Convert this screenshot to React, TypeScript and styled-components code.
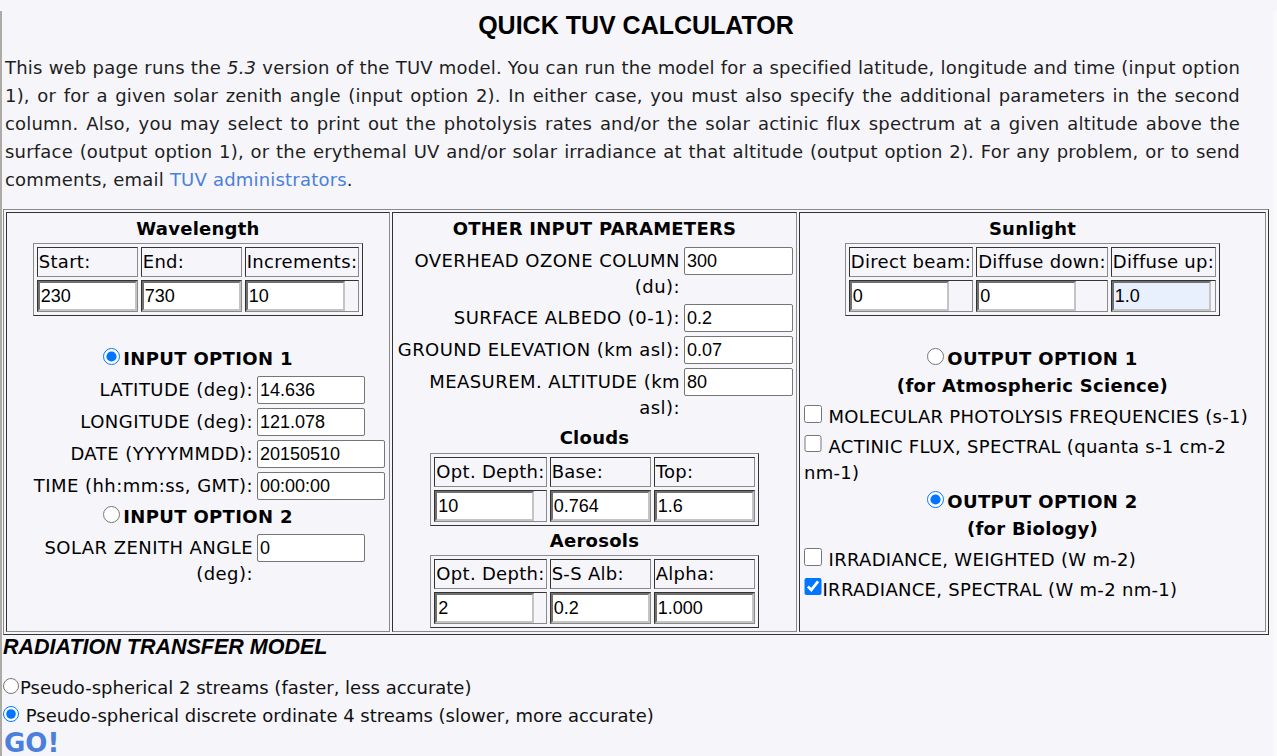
import React from "react";
import styled, { createGlobalStyle } from "styled-components";

const GlobalStyle = createGlobalStyle`
  html, body {
    margin: 0;
    padding: 0;
    background: #f5f5fa;
  }
  body {
    font-family: "DejaVu Sans", Verdana, sans-serif;
    font-size: 18px;
    color: #111;
  }
`;

const Page = styled.div`
  box-sizing: border-box;
  min-height: 756px;
  border-left: 2px solid #aeaaa5;
  border-right: 4px solid #f9f9fc;
  padding: 0 4px 0 1px;
`;

const Title = styled.h1`
  margin: 11px 0 0;
  font: bold 25px/29px "Liberation Sans", Arial, sans-serif;
  text-align: center;
  color: #000;
`;

const Intro = styled.p`
  margin: 14px 29px 0 2px;
  line-height: 28px;
  letter-spacing: 0.2px;
  text-align: justify;
  color: #1e1e1e;
`;

const Link = styled.a`
  color: #4a80dc;
  text-decoration: none;
`;

const Panel = styled.div`
  margin-top: 15px;
  display: grid;
  grid-template-columns: 384px 405px 467px;
  gap: 2px;
  padding: 2px;
  border: 1px solid;
  border-color: #8a8a8a #333 #333 #8a8a8a;
`;

const Column = styled.div<{ $px?: number }>`
  border: 1px solid;
  border-color: #333 #8a8a8a #8a8a8a #333;
  padding: 1px ${(p) => p.$px ?? 1}px 3px;
`;

const SectionTitle = styled.div<{ $mt?: number }>`
  margin-top: ${(p) => p.$mt ?? 0}px;
  font-weight: bold;
  text-align: center;
  line-height: 28px;
  letter-spacing: 0.25px;
  color: #000;
`;

const DataTable = styled.div<{ $mt?: number }>`
  display: grid;
  grid-template-columns: repeat(3, auto);
  gap: 3px;
  padding: 3px;
  width: max-content;
  margin: ${(p) => p.$mt ?? 0}px auto 0;
  border: 1px solid;
  border-color: #8a8a8a #333 #333 #8a8a8a;
`;

const HeadCell = styled.div`
  border: 1px solid;
  border-color: #333 #8a8a8a #8a8a8a #333;
  padding: 0 1px;
  line-height: 28px;
  letter-spacing: 0.3px;
  white-space: nowrap;
  color: #000;
`;

const InputCell = styled.div`
  border: 1px solid;
  border-color: #333 #8a8a8a #8a8a8a #333;
  padding: 0;
  display: flex;
`;

const DataInput = styled.input<{ $filled?: boolean }>`
  box-sizing: border-box;
  width: 99px;
  height: 30px;
  margin: 0;
  padding: 1px;
  border: 2px inset #c4c4c4;
  background: ${(p) => (p.$filled ? "#e8f0fe" : "#fff")};
  font: 18px "Liberation Sans", Arial, sans-serif;
  color: #000;
`;

const FieldGrid = styled.div<{ $label: number; $ml: number; $mt: number }>`
  display: grid;
  grid-template-columns: ${(p) => p.$label}px auto;
  column-gap: 4px;
  row-gap: 4px;
  align-items: start;
  margin: ${(p) => p.$mt}px 0 0 ${(p) => p.$ml}px;
`;

const FieldLabel = styled.label`
  text-align: right;
  line-height: 26px;
  padding-top: 1px;
  letter-spacing: 0.45px;
  color: #000;
`;

const FieldInput = styled.input<{ $w: number }>`
  box-sizing: border-box;
  width: ${(p) => p.$w}px;
  height: 28px;
  margin: 0;
  padding: 1px 2px;
  border: 1px solid #767676;
  border-radius: 2px;
  background: #fff;
  font: 18px "Liberation Sans", Arial, sans-serif;
  color: #000;
`;

const OptionHeading = styled.label<{ $mt: number }>`
  display: block;
  margin-top: ${(p) => p.$mt}px;
  text-align: center;
  font-weight: bold;
  line-height: 27px;
  letter-spacing: 0.35px;
  color: #000;
`;

const SubHeading = styled.div`
  text-align: center;
  font-weight: bold;
  line-height: 28px;
  letter-spacing: 0.3px;
  color: #000;
`;

const Radio = styled.input.attrs({ type: "radio" })<{ $size?: number }>`
  width: ${(p) => p.$size ?? 17}px;
  height: ${(p) => p.$size ?? 17}px;
  margin: 4px 3px 0 0;
  vertical-align: baseline;
`;

const CheckLine = styled.label`
  display: block;
  line-height: 27px;
  letter-spacing: 0.3px;
  color: #000;
`;

const Keep = styled.span`
  white-space: nowrap;
`;

const Check = styled.input.attrs({ type: "checkbox" })`
  width: 17.5px;
  height: 17.5px;
  margin: 5px 1px 0 0;
  vertical-align: baseline;
`;

const ModelTitle = styled.div`
  margin-top: 1px;
  font: italic bold 21.5px/22px "Liberation Sans", Arial, sans-serif;
  color: #000;
`;

const ModelList = styled.div`
  margin-top: 16px;
`;

const ModelLine = styled.label`
  display: block;
  line-height: 28px;
  color: #111;
`;

const ModelRadio = styled(Radio)`
  margin: 0 1px 0 0;
`;

const Go = styled.div`
  font-weight: bold;
  font-size: 26px;
  line-height: 26px;
  color: #4a80dc;
  margin-left: 1px;
`;

type DataCol = { head: string; value: string; filled?: boolean };

function MiniTable({ cols, mt }: { cols: DataCol[]; mt?: number }) {
  return (
    <DataTable $mt={mt}>
      {cols.map((c) => (
        <HeadCell key={"h" + c.head}>{c.head}</HeadCell>
      ))}
      {cols.map((c) => (
        <InputCell key={"i" + c.head}>
          <DataInput defaultValue={c.value} $filled={c.filled} />
        </InputCell>
      ))}
    </DataTable>
  );
}

type Field = { label: string; value: string; w: number };

function Fields({
  fields,
  label,
  ml,
  mt,
}: {
  fields: Field[];
  label: number;
  ml: number;
  mt: number;
}) {
  return (
    <FieldGrid $label={label} $ml={ml} $mt={mt}>
      {fields.map((f) => (
        <React.Fragment key={f.label}>
          <FieldLabel>{f.label}</FieldLabel>
          <FieldInput $w={f.w} defaultValue={f.value} />
        </React.Fragment>
      ))}
    </FieldGrid>
  );
}

export default function App() {
  return (
    <>
      <GlobalStyle />
      <Page>
        <Title>QUICK TUV CALCULATOR</Title>
        <Intro>
          This web page runs the <i>5.3</i> version of the TUV model. You can run the
          model for a specified latitude, longitude and time (input option 1), or for a
          given solar zenith angle (input option 2). In either case, you must also
          specify the additional parameters in the second column. Also, you may select
          to print out the photolysis rates and/or the solar actinic flux spectrum at a
          given altitude above the surface (output option 1), or the erythemal UV
          and/or solar irradiance at that altitude (output option 2). For any problem,
          or to send comments, email <Link href="#">TUV administrators</Link>.
        </Intro>

        <Panel>
          <Column>
            <SectionTitle $mt={1}>Wavelength</SectionTitle>
            <MiniTable
              cols={[
                { head: "Start:", value: "230" },
                { head: "End:", value: "730" },
                { head: "Increments:", value: "10" },
              ]}
            />
            <OptionHeading $mt={28}>
              <Radio name="inopt" defaultChecked />
              INPUT OPTION 1
            </OptionHeading>
            <Fields
              label={222}
              ml={23}
              mt={4}
              fields={[
                { label: "LATITUDE (deg):", value: "14.636", w: 108 },
                { label: "LONGITUDE (deg):", value: "121.078", w: 108 },
                { label: "DATE (YYYYMMDD):", value: "20150510", w: 128 },
                { label: "TIME (hh:mm:ss, GMT):", value: "00:00:00", w: 128 },
              ]}
            />
            <OptionHeading $mt={2}>
              <Radio name="inopt" />
              INPUT OPTION 2
            </OptionHeading>
            <Fields
              label={222}
              ml={23}
              mt={4}
              fields={[{ label: "SOLAR ZENITH ANGLE (deg):", value: "0", w: 108 }]}
            />
          </Column>

          <Column>
            <SectionTitle $mt={1}>OTHER INPUT PARAMETERS</SectionTitle>
            <Fields
              label={283}
              ml={3}
              mt={4}
              fields={[
                { label: "OVERHEAD OZONE COLUMN (du):", value: "300", w: 109 },
                { label: "SURFACE ALBEDO (0-1):", value: "0.2", w: 109 },
                { label: "GROUND ELEVATION (km asl):", value: "0.07", w: 109 },
                { label: "MEASUREM. ALTITUDE (km asl):", value: "80", w: 109 },
              ]}
            />
            <SectionTitle $mt={3}>Clouds</SectionTitle>
            <MiniTable
              mt={1}
              cols={[
                { head: "Opt. Depth:", value: "10" },
                { head: "Base:", value: "0.764" },
                { head: "Top:", value: "1.6" },
              ]}
            />
            <SectionTitle $mt={1}>Aerosols</SectionTitle>
            <MiniTable
              cols={[
                { head: "Opt. Depth:", value: "2" },
                { head: "S-S Alb:", value: "0.2" },
                { head: "Alpha:", value: "1.000" },
              ]}
            />
          </Column>

          <Column $px={4}>
            <SectionTitle $mt={1}>Sunlight</SectionTitle>
            <MiniTable
              cols={[
                { head: "Direct beam:", value: "0" },
                { head: "Diffuse down:", value: "0" },
                { head: "Diffuse up:", value: "1.0", filled: true },
              ]}
            />
            <OptionHeading $mt={28}>
              <Radio name="outopt" />
              OUTPUT OPTION 1
            </OptionHeading>
            <SubHeading>(for Atmospheric Science)</SubHeading>
            <CheckLine>
              <Check /> MOLECULAR PHOTOLYSIS FREQUENCIES (s-1)
            </CheckLine>
            <CheckLine>
              <Check /> ACTINIC FLUX, SPECTRAL (quanta s-1 cm-2 <Keep>nm-1)</Keep>
            </CheckLine>
            <OptionHeading $mt={1}>
              <Radio name="outopt" defaultChecked />
              OUTPUT OPTION 2
            </OptionHeading>
            <SubHeading>(for Biology)</SubHeading>
            <CheckLine>
              <Check /> IRRADIANCE, WEIGHTED (W m-2)
            </CheckLine>
            <CheckLine>
              <Check defaultChecked />
              IRRADIANCE, SPECTRAL (W m-2 nm-1)
            </CheckLine>
          </Column>
        </Panel>

        <ModelTitle>RADIATION TRANSFER MODEL</ModelTitle>
        <ModelList>
          <ModelLine>
            <ModelRadio name="model" $size={16} />
            Pseudo-spherical 2 streams (faster, less accurate)
          </ModelLine>
          <ModelLine>
            <ModelRadio name="model" $size={16} defaultChecked /> Pseudo-spherical
            discrete ordinate 4 streams (slower, more accurate)
          </ModelLine>
        </ModelList>
        <Go>GO!</Go>
      </Page>
    </>
  );
}
